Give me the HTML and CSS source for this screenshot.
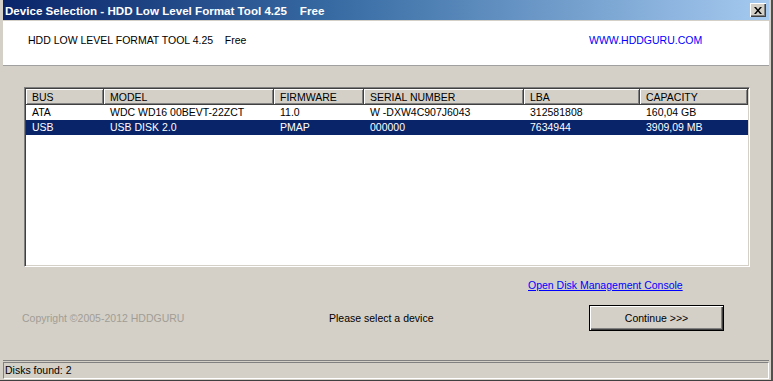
FILE: index.html
```html
<!DOCTYPE html>
<html lang="en">
<head>
    <meta charset="UTF-8">
    <title>Device Selection - HDD Low Level Format Tool 4.25</title>
    <link rel="stylesheet" href="styles.css">
</head>
<body>
    <div class="window">
        <div class="titlebar">
            <span class="title">Device Selection - HDD Low Level Format Tool 4.25&nbsp;&nbsp;&nbsp;&nbsp;Free</span>
            <button class="close-button">
                <svg width="8" height="7" viewBox="0 0 8 7">
                    <path d="M0 0h2l2 2.5L6 0h2L5 3.5 8 7H6L4 4.5 2 7H0l3-3.5z" fill="#000"/>
                </svg>
            </button>
        </div>
        <div class="banner">
            <span class="product">HDD LOW LEVEL FORMAT TOOL 4.25&nbsp;&nbsp;&nbsp;&nbsp;Free</span>
            <a class="site" href="#">WWW.HDDGURU.COM</a>
        </div>
        <div class="content">
            <div class="device-list">
                <div class="list-row list-header">
                    <div>BUS</div>
                    <div>MODEL</div>
                    <div>FIRMWARE</div>
                    <div>SERIAL NUMBER</div>
                    <div>LBA</div>
                    <div>CAPACITY</div>
                </div>
                <div class="list-row">
                    <div>ATA</div>
                    <div>WDC WD16 00BEVT-22ZCT</div>
                    <div>11.0</div>
                    <div>W -DXW4C907J6043</div>
                    <div>312581808</div>
                    <div>160,04 GB</div>
                </div>
                <div class="list-row selected">
                    <div>USB</div>
                    <div>USB DISK 2.0</div>
                    <div>PMAP</div>
                    <div>000000</div>
                    <div>7634944</div>
                    <div>3909,09 MB</div>
                </div>
            </div>
            <div class="link-row">
                <a href="#">Open Disk Management Console</a>
            </div>
            <div class="footer">
                <span class="copyright">Copyright &copy;2005-2012 HDDGURU</span>
                <span class="message">Please select a device</span>
                <button class="continue">Continue &gt;&gt;&gt;</button>
            </div>
        </div>
        <div class="statusbar">
            <div class="status-panel">Disks found: 2</div>
        </div>
    </div>
</body>
</html>
```

FILE: styles.css
```css
body {
    margin: 0;
    padding: 0;
    font-family: Tahoma, 'Liberation Sans', Arial, sans-serif;
    font-size: 10.5px;
    color: #000;
    background-color: #d4d0c8;
}
.window {
    box-sizing: border-box;
    width: 773px;
    height: 381px;
    display: flex;
    flex-direction: column;
    background-color: #d4d0c8;
    padding-left: 3px;
    padding-right: 2px;
    border-right: 2px solid #505050;
    border-bottom: 1px solid #404040;
    overflow: hidden;
}
.titlebar {
    height: 20px;
    display: flex;
    align-items: center;
    justify-content: space-between;
    padding: 1px 2px 0 2px;
    box-sizing: border-box;
    background: linear-gradient(to right, #0a246a 0%, #3a6ea5 45%, #a6caf0 100%);
    margin-bottom: 1px;
}
.title {
    color: white;
    font-weight: bold;
    font-size: 11.6px;
    white-space: pre;
}
.close-button {
    width: 16px;
    height: 14px;
    padding: 0;
    margin-right: 1px;
    margin-bottom: 1px;
    display: flex;
    align-items: center;
    justify-content: center;
    background-color: #d4d0c8;
    border: none;
    box-shadow: inset 1px 1px #fff, inset -1px -1px #404040, inset -2px -2px #808080;
}
.banner {
    height: 45px;
    box-sizing: border-box;
    display: flex;
    align-items: center;
    background-color: white;
    padding-left: 25px;
    padding-bottom: 6px;
    border-bottom: 1px solid #a0a0a0;
}
.product {
    width: 561px;
    white-space: pre;
}
.site {
    color: #0000ff;
    text-decoration: none;
}
.content {
    flex: 1;
    display: flex;
    flex-direction: column;
    padding-top: 21px;
    padding-left: 21px;
}
.device-list {
    width: 722px;
    height: 176px;
    background-color: white;
    border: 1px solid;
    border-color: #808080 #fff #fff #808080;
    box-shadow: inset 1px 1px #404040, inset -1px -1px #d4d0c8;
    padding: 1px;
}
.list-row {
    display: grid;
    grid-template-columns: 78px 170px 90px 160px 116px 108px;
    height: 15px;
    line-height: 15px;
}
.list-row div {
    padding-left: 6px;
    white-space: nowrap;
    overflow: hidden;
}
.list-header {
    height: 16px;
    line-height: 17px;
}
.list-header div {
    background-color: #d4d0c8;
    box-shadow: inset 1px 1px #fff, inset -1px -1px #808080;
    border-right: 1px solid #404040;
    border-bottom: 1px solid #404040;
}
.list-row.selected {
    background-color: #0a246a;
    color: white;
}
.link-row {
    margin-top: 11px;
    padding-left: 504px;
    height: 14px;
    line-height: 14px;
}
.link-row a {
    color: #0000ff;
}
.footer {
    margin-top: 13px;
    display: flex;
    align-items: center;
    height: 26px;
}
.copyright {
    width: 307px;
    color: #a19d95;
    margin-left: -2px;
}
.message {
    width: 260px;
}
.continue {
    width: 135px;
    height: 26px;
    font-family: inherit;
    font-size: 10.5px;
    background-color: #d4d0c8;
    border: 1px solid #000;
    box-shadow: inset 1px 1px #fff, inset -1px -1px #404040, inset -2px -2px #808080;
    padding: 0;
}
.statusbar {
    border-top: 1px solid #808080;
    padding-top: 1px;
    box-sizing: border-box;
    height: 20px;
}
.status-panel {
    height: 17px;
    box-sizing: border-box;
    line-height: 15px;
    padding-left: 1px;
    border: 1px solid;
    border-color: #808080 #fff #fff #808080;
}
```
